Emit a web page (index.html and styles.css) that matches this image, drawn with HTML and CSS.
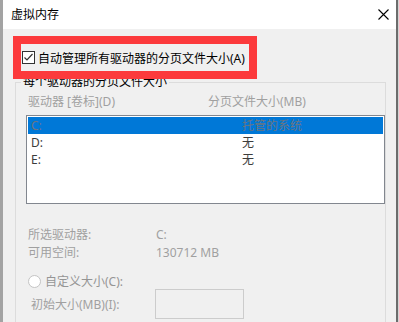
FILE: index.html
```html
<!DOCTYPE html>
<html lang="zh-CN">
<head>
    <meta charset="UTF-8">
    <meta name="viewport" content="width=device-width, initial-scale=1.0">
    <title>虚拟内存</title>
    <link rel="stylesheet" href="styles.css">
</head>
<body>
    <div class="dialog">
        <header class="titlebar">
            <span class="title">虚拟内存</span>
            <svg class="close" width="11" height="11" viewBox="0 0 11 11">
                <path d="M0.5 0.5 L10.5 10.5 M10.5 0.5 L0.5 10.5" stroke="#000" stroke-width="1.1" fill="none"/>
            </svg>
        </header>

        <div class="content">
            <label class="auto-manage">
                <span class="checkbox">
                    <svg width="11" height="11" viewBox="0 0 11 11">
                        <polyline points="1.5,5.5 4,8 9.5,2" stroke="#333" stroke-width="1.2" fill="none"/>
                    </svg>
                </span>
                自动管理所有驱动器的分页文件大小(A)
            </label>

            <fieldset class="drives">
                <legend>每个驱动器的分页文件大小</legend>

                <div class="cols">
                    <span>驱动器 [卷标](D)</span>
                    <span>分页文件大小(MB)</span>
                </div>

                <ul class="drive-list">
                    <li class="selected"><span>C:</span><span>托管的系统</span></li>
                    <li><span>D:</span><span>无</span></li>
                    <li><span>E:</span><span>无</span></li>
                </ul>

                <div class="info">
                    <span>所选驱动器:</span><span>C:</span>
                    <span>可用空间:</span><span>130712 MB</span>
                </div>

                <label class="radio-row">
                    <span class="radio"></span>
                    自定义大小(C):
                </label>

                <div class="size-row">
                    <span class="size-label">初始大小(MB)(I):</span>
                    <span class="input"></span>
                </div>
            </fieldset>
        </div>
    </div>
</body>
</html>
```

FILE: styles.css
```css
body {
    margin: 0;
    background-color: #d4d4d4;
    font-family: "Noto Sans", "Noto Sans CJK SC", sans-serif;
    font-size: 12px;
}

.dialog {
    width: 398px;
    height: 322px;
    box-sizing: border-box;
    border-left: 3px solid #a3a3a3;
    border-right: 2px solid #6c6c6c;
    background-color: #f0f0f0;
    overflow: hidden;
}

.titlebar {
    height: 29px;
    background-color: #fff;
    display: flex;
    align-items: center;
    justify-content: space-between;
    padding: 0 7px 0 8px;
}

.title {
    color: #000;
    line-height: 29px;
}

.close {
    margin-top: -1px;
}

.content {
    padding-left: 10px;
}

/* recuadro rojo de la captura */
.auto-manage {
    position: relative;
    z-index: 1;
    display: flex;
    align-items: center;
    gap: 3px;
    width: 227px;
    height: 27px;
    margin-top: 7px;
    padding-left: 1px;
    box-sizing: content-box;
    border: 8px solid #fc3a3c;
    background-color: #f0f0f0;
    color: #000;
    white-space: nowrap;
}

.checkbox {
    width: 11px;
    height: 11px;
    border: 1px solid #333;
    background-color: #fff;
    display: flex;
    flex-shrink: 0;
}

.drives {
    width: 369px;
    margin: -4px 0 0 2px;
    padding: 0;
    box-sizing: border-box;
    border: 1px solid #dcdcdc;
    min-height: 300px;
}

.drives legend {
    margin-left: 5px;
    padding: 0 2px;
    line-height: 14px;
    color: #000;
}

.cols {
    display: grid;
    grid-template-columns: 180px 1fr;
    margin-top: 6px;
    padding-left: 12px;
    line-height: 14px;
    color: #a0a0a0;
}

.drive-list {
    list-style: none;
    margin: 6px 0 0 10px;
    padding: 1px;
    width: 359px;
    height: 89px;
    box-sizing: border-box;
    border: 1px solid #82878f;
    background-color: #fff;
}

.drive-list li {
    display: grid;
    grid-template-columns: 211px 1fr;
    height: 17px;
    line-height: 17px;
    padding-left: 3px;
    color: #3c3c3c;
}

.drive-list li.selected {
    background-color: #0078d7;
    color: #6d7580;
}

.info {
    display: grid;
    grid-template-columns: 128px 1fr;
    margin-top: 22px;
    padding-left: 12px;
    line-height: 18px;
    color: #a0a0a0;
}

.radio-row {
    display: flex;
    align-items: center;
    gap: 4px;
    height: 16px;
    margin-top: 11px;
    padding-left: 12px;
    color: #959595;
}

.radio {
    width: 11px;
    height: 11px;
    border: 1px solid #c4c4c4;
    border-radius: 50%;
    background-color: #fff;
}

.size-row {
    display: flex;
    align-items: center;
    height: 30px;
    padding-left: 15px;
    color: #a0a0a0;
}

.size-label {
    width: 124px;
}

.input {
    width: 89px;
    height: 30px;
    box-sizing: border-box;
    border: 1px solid #cccccc;
    background-color: #f0f0f0;
}
```
